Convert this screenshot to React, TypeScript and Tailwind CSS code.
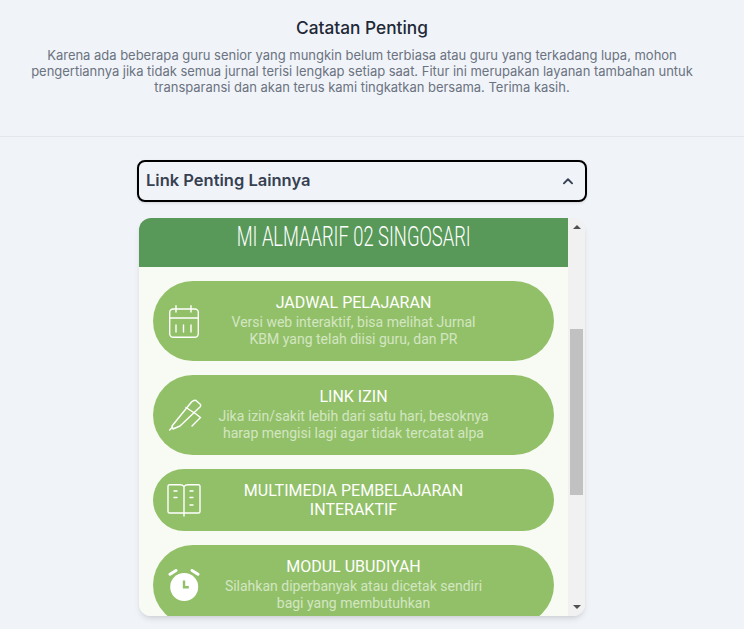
import type { ReactNode } from 'react'

const poppins = "font-['Inter','Noto_Sans',sans-serif]"
const roboto = "font-['Roboto',sans-serif]"

function CalendarIcon() {
  return (
    <svg className="ml-[2px]" width="30" height="33" viewBox="0 0 30 33" fill="none" stroke="white" strokeWidth="1.4" strokeLinecap="round" strokeLinejoin="round">
      <rect x="0.7" y="4" width="28.6" height="28.3" rx="3.5" />
      <path d="M0.7 13h28.6M7 0.7v6.300M22 0.7v6.300M7 20v7M14.500 20v7M22 20v7" />
    </svg>
  )
}

function PenIcon() {
  return (
    <svg className="ml-[2px]" width="33" height="33" viewBox="0 0 33 33" fill="none" stroke="white" strokeWidth="1.4" strokeLinecap="round" strokeLinejoin="round">
      <path d="M3 27L22.500 3Q25 0.700 27 1.500L31.500 5.500Q32 7 31 8L11 27L4 30Z" />
      <path d="M0.700 31L3.500 28M17 8.500L27 15L31.500 18.500L23 27" />
    </svg>
  )
}

function BookIcon() {
  return (
    <svg width="34" height="33" viewBox="0 0 34 33" fill="none" stroke="white" strokeWidth="1.4" strokeLinecap="round" strokeLinejoin="round">
      <path d="M17 2.500Q15.500 0.800 13 0.800H2.500A1.500 1.500 0 0 0 1 2.300V27.500A1.500 1.500 0 0 0 2.500 29H31.500A1.500 1.500 0 0 0 33 27.500V2.300A1.500 1.500 0 0 0 31.500 0.800H21Q18.500 0.800 17 2.500ZM17 2.500V32" />
      <path d="M7 7h3M7 13.500h3M23 7h3M23 13.500h3M23 21h3" />
    </svg>
  )
}

function ClockIcon() {
  return (
    <svg className="ml-[1px]" width="32" height="32" viewBox="0 0 32 32" fill="none">
      <circle cx="16.200" cy="18" r="14" fill="white" />
      <path d="M16 11.500v6.800h4.800" stroke="#92c068" strokeWidth="2.400" />
      <path d="M2 5.300L8 1.500M30 5.300L24 1.500" stroke="white" strokeWidth="3" strokeLinecap="round" />
    </svg>
  )
}

function LinkPill({ icon, title, sub, className }: { icon: ReactNode; title: ReactNode; sub?: string[]; className: string }) {
  return (
    <div className={`grid shrink-0 grid-cols-[46px_1fr_46px] items-center rounded-[40px] bg-[#92c068] px-[14px] ${className}`}>
      <div className="flex justify-start">{icon}</div>
      <div className={`text-center text-white ${roboto}`}>
        <div className={sub ? 'text-[16px] leading-[18px]' : 'text-[16px] leading-[19px]'}>{title}</div>
        {sub && (
          <div className="mt-[2px] text-[14px] leading-[17px] text-[#d3e6c2]">
            {sub.map((line) => (
              <div key={line}>{line}</div>
            ))}
          </div>
        )}
      </div>
      <div />
    </div>
  )
}

export default function App() {
  return (
    <div className={`h-[629px] overflow-hidden bg-[#f0f4f9] ${poppins}`}>
      <div className="h-[137px] border-b border-[#e3e7ec] pt-[18px]">
        <div className="w-[724px] text-center">
          <h2 className="text-[17.3px] font-medium leading-[20px] text-[#1f2937]">Catatan Penting</h2>
          <p className="mx-auto mt-[9px] w-[680px] text-[13px] leading-[16px] tracking-[-0.02px] text-[#6b7280]">
            Karena ada beberapa guru senior yang mungkin belum terbiasa atau guru yang terkadang lupa, mohon pengertiannya jika tidak semua jurnal terisi lengkap setiap saat. Fitur ini merupakan layanan tambahan untuk transparansi dan akan terus kami tingkatkan bersama. Terima kasih.
          </p>
        </div>
      </div>

      <div className="w-[724px]">
        <div className="mx-auto mt-[23px] w-[450px]">
          <div className="flex h-[42px] items-center justify-between rounded-lg border-2 border-black px-[7px] shadow-sm">
            <span className="pb-[2px] text-[16.5px] font-semibold text-[#374151]">Link Penting Lainnya</span>
            <svg className="mr-[3px]" width="14" height="14" viewBox="0 0 24 24" fill="none" stroke="#374151" strokeWidth="3.200" strokeLinecap="round" strokeLinejoin="round">
              <path d="M5 16l7-7 7 7" />
            </svg>
          </div>

          <div className="mx-auto mt-[16px] flex h-[398px] w-[446px] overflow-hidden rounded-xl shadow-md">
            <div className="flex min-w-0 flex-1 flex-col overflow-hidden bg-[#f8fbf4]">
              <div className="flex h-[49px] shrink-0 items-start justify-center bg-[#589858]">
                <span className="origin-top scale-x-[0.655] whitespace-nowrap font-['Roboto',sans-serif] text-[28px] font-light leading-[38px] text-white">MI ALMAARIF 02 SINGOSARI</span>
              </div>
              <div className="flex flex-col gap-[14px] px-[14px] pt-[14px]">
                <LinkPill className="h-[80px]" icon={<CalendarIcon />} title="JADWAL PELAJARAN" sub={['Versi web interaktif, bisa melihat Jurnal', 'KBM yang telah diisi guru, dan PR']} />
                <LinkPill className="h-[80px]" icon={<PenIcon />} title="LINK IZIN" sub={['Jika izin/sakit lebih dari satu hari, besoknya', 'harap mengisi lagi agar tidak tercatat alpa']} />
                <LinkPill className="h-[62px]" icon={<BookIcon />} title={<>MULTIMEDIA PEMBELAJARAN<br />INTERAKTIF</>} />
                <LinkPill className="h-[80px]" icon={<ClockIcon />} title="MODUL UBUDIYAH" sub={['Silahkan diperbanyak atau dicetak sendiri', 'bagi yang membutuhkan']} />
              </div>
            </div>

            <div className="flex w-[17px] shrink-0 flex-col items-center bg-[#f1f1f1]">
              <svg className="mt-[7px]" width="8" height="4" viewBox="0 0 8 4"><path d="M4 0L8 4H0z" fill="#505050" /></svg>
              <div className="mt-[100px] h-[166px] w-[13px] bg-[#c1c1c1]" />
              <svg className="mt-auto mb-[7px]" width="8" height="4" viewBox="0 0 8 4"><path d="M0 0h8L4 4z" fill="#505050" /></svg>
            </div>
          </div>
        </div>
      </div>
    </div>
  )
}
